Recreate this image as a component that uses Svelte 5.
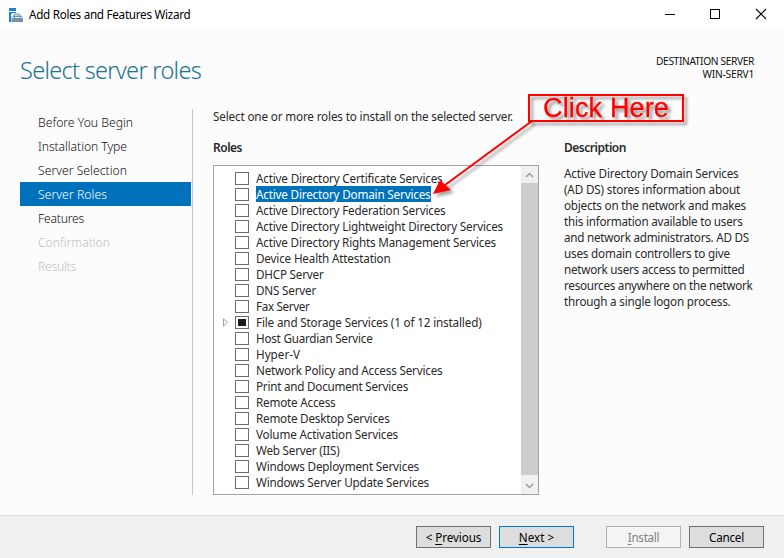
<script>
  const steps = [
    { name: 'Before You Begin', w: 95 },
    { name: 'Installation Type', w: 89 },
    { name: 'Server Selection', w: 89 },
    { name: 'Server Roles', w: 69, state: 'current' },
    { name: 'Features', w: 46 },
    { name: 'Confirmation', w: 72, state: 'disabled' },
    { name: 'Results', w: 38, state: 'disabled' }
  ];
  const roles = [
    { name: 'Active Directory Certificate Services', w: 186.5 },
    { name: 'Active Directory Domain Services', w: 174.5, selected: true },
    { name: 'Active Directory Federation Services', w: 189.5 },
    { name: 'Active Directory Lightweight Directory Services', w: 247 },
    { name: 'Active Directory Rights Management Services', w: 240 },
    { name: 'Device Health Attestation', w: 134.5 },
    { name: 'DHCP Server', w: 67.5 },
    { name: 'DNS Server', w: 60 },
    { name: 'Fax Server', w: 53.5 },
    { name: 'File and Storage Services (1 of 12 installed)', w: 225.5, partial: true },
    { name: 'Host Guardian Service', w: 116.5 },
    { name: 'Hyper-V', w: 44 },
    { name: 'Network Policy and Access Services', w: 186.5 },
    { name: 'Print and Document Services', w: 152 },
    { name: 'Remote Access', w: 79.5 },
    { name: 'Remote Desktop Services', w: 133.5 },
    { name: 'Volume Activation Services', w: 142 },
    { name: 'Web Server (IIS)', w: 83.5 },
    { name: 'Windows Deployment Services', w: 163 },
    { name: 'Windows Server Update Services', w: 173 }
  ];
  const description = [
    { text: 'Active Directory Domain Services', w: 174.5 },
    { text: '(AD DS) stores information about', w: 176 },
    { text: 'objects on the network and makes', w: 182 },
    { text: 'this information available to users', w: 178.5 },
    { text: 'and network administrators. AD DS', w: 185 },
    { text: 'uses domain controllers to give', w: 166 },
    { text: 'network users access to permitted', w: 180.5 },
    { text: 'resources anywhere on the network', w: 188.5 },
    { text: 'through a single logon process.', w: 166.5 }
  ];

  // Tracks a label's letters so that it takes the given width.
  function fit(node, width) {
    const natural = node.getBoundingClientRect().width;
    node.style.letterSpacing = `${(width - natural) / node.textContent.length}px`;
  }
</script>

<div class="window">
  <header class="titlebar">
    <svg class="app" width="15" height="15" viewBox="0 0 15 15">
      <path d="M0 0h7v3H0zM0 4h7v1H3L2 7v7H0z" fill="#1883d7" />
      <path d="M2.500 9.500 4 7.500h8.500L14 9.500V14H2.500z" fill="#7292a8" />
      <path d="M5.500 7.500V6h5v1.500" fill="none" stroke="#7292a8" />
      <path d="M3 9.500h2m1 0h4.500m1 0H14" stroke="#eef3f6" />
    </svg>
    <span class="caption" use:fit={161.5}>Add Roles and Features Wizard</span>
    <svg class="controls" width="114" height="30" viewBox="0 0 114 30" fill="none" stroke="#000" shape-rendering="crispEdges">
      <path d="M11 14.500h10M56.500 9.500h9v9h-9z" />
      <path d="m102 9 10 10m0-10-10 10" stroke-width="1.1" shape-rendering="auto" />
    </svg>
  </header>

  <section class="heading">
    <h1><span use:fit={181}>Select server roles</span></h1>
    <div class="dest">
      <div><span use:fit={98}>DESTINATION SERVER</span></div>
      <div><span use:fit={51.5}>WIN-SERV1</span></div>
    </div>
  </section>

  <main>
    <nav>
      {#each steps as step}
        <div class="step {step.state ?? ''}"><span use:fit={step.w}>{step.name}</span></div>
      {/each}
    </nav>

    <section class="roles">
      <p><span use:fit={300}>Select one or more roles to install on the selected server.</span></p>
      <h2><span use:fit={29}>Roles</span></h2>
      <div class="list">
        <div class="rows">
          {#each roles as role}
            <div class="row">
              <span class="toggle">
                {#if role.partial}
                  <svg width="6" height="9" viewBox="0 0 6 9"><path d="M.5.8v7.400L4.500 4.500z" fill="#fff" stroke="#a0a0a0" /></svg>
                {/if}
              </span>
              <span class="box" class:partial={role.partial}></span>
              <span class="name" class:selected={role.selected} use:fit={role.w}>{role.name}</span>
            </div>
          {/each}
        </div>
        <div class="scroll">
          <div class="arrow"><svg width="9" height="6" viewBox="0 0 9 6"><path d="m1 5 3.500-3.500L8 5" /></svg></div>
          <div class="thumb"></div>
          <div class="arrow down"><svg width="9" height="6" viewBox="0 0 9 6"><path d="m1 1 3.500 3.500L8 1" /></svg></div>
        </div>
      </div>
    </section>

    <aside>
      <h2><span use:fit={62}>Description</span></h2>
      <div class="text">
        {#each description as line}
          <div><span use:fit={line.w}>{line.text}</span></div>
        {/each}
      </div>
    </aside>
  </main>

  <footer>
    <button><span use:fit={55.5}>&lt; <u>P</u>revious</span></button>
    <button class="default"><span use:fit={35.5}><u>N</u>ext &gt;</span></button>
    <button class="install" disabled><span use:fit={31.5}><u>I</u>nstall</span></button>
    <button><span use:fit={35}>Cancel</span></button>
  </footer>

  <svg class="pointer" width="130" height="100" viewBox="420 110 130 100">
    <path d="M532 121 445 185" stroke="#f00" stroke-width="2" />
    <path d="m433 194 7-14 11 10z" fill="#f00" />
  </svg>
  <div class="callout"><span use:fit={126}>Click Here</span></div>
</div>

<style>
  :global(body) { margin: 0; }
  .window {
    position: relative;
    width: 784px;
    height: 558px;
    overflow: hidden;
    display: flex;
    flex-direction: column;
    background: #fcfcfc;
    color: #2a2a2a;
    font: 11.700px/16px "Noto Sans", "Open Sans", sans-serif;
    white-space: nowrap;
  }
  h1, h2, p { margin: 0; }
  .titlebar {
    display: flex;
    align-items: center;
    height: 30px;
    padding-left: 9px;
    background: #fff;
    color: #000;
  }
  .caption { margin: 0 0 2px 5px; }
  .controls { margin-left: auto; margin-right: 16px; }
  .heading {
    display: flex;
    justify-content: space-between;
    height: 79px;
    padding: 0 30px 0 20px;
    box-sizing: border-box;
  }
  h1 {
    margin-top: 24px;
    font-size: 23.500px;
    font-weight: 300;
    line-height: 32px;
    color: #1b7292;
  }
  .dest {
    margin-top: 25px;
    font-size: 10.200px;
    line-height: 13px;
    text-align: right;
    color: #111;
  }
  main { display: flex; flex: 1; }
  nav {
    width: 172px;
    height: 385px;
    margin-left: 20px;
    padding-top: 1px;
    border-right: 1px solid #c8c8c8;
    box-sizing: content-box;
  }
  .step {
    width: 171px;
    height: 24px;
    padding-left: 18px;
    box-sizing: border-box;
    font-size: 12.200px;
    font-weight: 300;
    line-height: 25px;
    color: #111;
  }
  .step.current { background: #0072bc; color: #fff; }
  .step.disabled { color: #bfbfbf; }
  .roles { width: 326px; margin-left: 20px; }
  .roles p { margin-top: -1px; }
  h2 { font-size: 12px; line-height: 16px; font-weight: 600; }
  .roles h2 { margin: 16px 0 9px; }
  .list {
    display: flex;
    height: 330px;
    border: 1px solid #a3a3a3;
    background: #fff;
    box-sizing: border-box;
  }
  .rows { flex: 1; padding-top: 4px; }
  .row { display: flex; align-items: center; height: 16px; }
  .toggle { display: flex; width: 12px; padding-left: 9px; }
  .box {
    width: 14px;
    height: 13px;
    margin: 1px 7px 0 0;
    border: 1px solid #6c6c6c;
    box-sizing: border-box;
    background: #fff;
  }
  .partial { background: linear-gradient(#1c1c1c, #1c1c1c) center / 8px 7px no-repeat; }
  .selected { background: #0072bc; color: #fff; }
  .scroll {
    display: flex;
    flex-direction: column;
    width: 17px;
    background: #cdcdcd;
  }
  .arrow {
    display: flex;
    align-items: center;
    justify-content: center;
    height: 17px;
    background: #f0f0f0;
  }
  .arrow.down { height: 19px; padding-top: 2px; box-sizing: border-box; }
  .arrow path { fill: none; stroke: #9c9c9c; stroke-width: 1.500; }
  .thumb { flex: 1; }
  aside { margin: 31px 0 0 25px; }
  .text { margin-top: 9px; }
  footer {
    display: flex;
    height: 43px;
    padding: 10px 20px 0;
    box-sizing: border-box;
    border-top: 1px solid #dadada;
    background: #f0f0f0;
    justify-content: flex-end;
    gap: 8px;
  }
  button {
    width: 75px;
    height: 22px;
    padding: 0;
    border: 1px solid #707070;
    background: #dddddd;
    color: #000;
    font: inherit;
    line-height: 20px;
  }
  .default { border-color: #0078d7; }
  .install { margin-left: 24px; border-color: #adb2b5; background: #f4f4f4; color: #838383; }
  u { text-underline-offset: 2px; }
  .callout {
    position: absolute;
    left: 528px;
    top: 94px;
    width: 156px;
    height: 28px;
    box-sizing: border-box;
    border: 2px solid #f00;
    padding-left: 13px;
    color: #f00;
    font: 27px/25px "Liberation Sans", Arial, sans-serif;
    -webkit-text-stroke: .3px #f00;
    filter: drop-shadow(3px 3px 1.500px rgba(0, 0, 0, .4));
  }
  .pointer {
    position: absolute;
    left: 420px;
    top: 110px;
    filter: drop-shadow(3px 3px 1.500px rgba(0, 0, 0, .35));
  }
</style>
